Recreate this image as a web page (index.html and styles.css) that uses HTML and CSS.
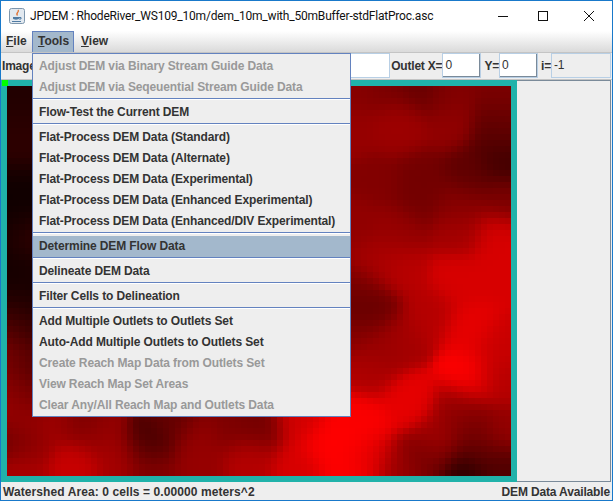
FILE: index.html
```html
<!DOCTYPE html>
<html>
    <head>
        <title>JPDEM</title>
        <meta charset="UTF-8">
        <link rel="stylesheet" href="styles.css">
    </head>
    <body>
        <div class="window">
            <!-- title bar -->
            <div class="titlebar">
                <svg class="appicon" width="16" height="16" viewBox="0 0 16 16">
                    <rect x="0.5" y="0.5" width="15" height="15" rx="2" fill="#e2e9f0" stroke="#7d96ad"/>
                    <path d="M9 2 C11 4 6 5 8.5 7.5" fill="none" stroke="#e0702f" stroke-width="1.3"/>
                    <path d="M4 9 H10 V10.5 C10 12 4 12 4 10.5 Z" fill="#4f7ba3"/>
                    <path d="M10 9.5 H12 V11 H10" fill="none" stroke="#4f7ba3"/>
                    <path d="M3 13.5 H12" stroke="#4f7ba3"/>
                </svg>
                <span class="title">JPDEM : RhodeRiver_WS109_10m/dem_10m_with_50mBuffer-stdFlatProc.asc</span>
                <div class="wincontrols">
                    <svg width="10" height="10" viewBox="0 0 10 10"><path d="M0 5.5 H10" stroke="#111"/></svg>
                    <svg width="10" height="10" viewBox="0 0 10 10"><rect x="0.5" y="0.5" width="9" height="9" fill="none" stroke="#111"/></svg>
                    <svg class="closebtn" width="10" height="10" viewBox="0 0 10 10"><path d="M0 0 L10 10 M10 0 L0 10" stroke="#111"/></svg>
                </div>
            </div>

            <!-- menu bar -->
            <div class="menubar">
                <span class="menu"><u>F</u>ile</span>
                <span class="menu menu-open"><u>T</u>ools</span>
                <span class="menu"><u>V</u>iew</span>
            </div>

            <!-- info row -->
            <div class="inforow">
                <span class="label">Image</span>
                <div class="field field-wide"></div>
                <span class="label">Outlet X=</span>
                <div class="field field-input">0</div>
                <span class="label label-y">Y=</span>
                <div class="field field-input">0</div>
                <span class="label label-i">i=</span>
                <div class="field field-index">-1</div>
            </div>

            <!-- map + side panel -->
            <div class="main">
                <div class="mapframe">
                    <canvas id="dem" class="dem" width="84" height="65"></canvas>
                    <div class="marker"></div>
                </div>
                <div class="sidepanel"></div>
            </div>

            <div class="statusbar">
                <span class="status-left">Watershed Area: 0 cells = 0.00000 meters^2</span>
                <span class="status-right">DEM Data Available</span>
            </div>

            <!-- tools popup -->
            <div class="popup">
                <div class="item disabled">Adjust DEM via Binary Stream Guide Data</div>
                <div class="item disabled">Adjust DEM via Seqeuential Stream Guide Data</div>
                <div class="sep"></div>
                <div class="item">Flow-Test the Current DEM</div>
                <div class="sep"></div>
                <div class="item">Flat-Process DEM Data (Standard)</div>
                <div class="item">Flat-Process DEM Data (Alternate)</div>
                <div class="item">Flat-Process DEM Data (Experimental)</div>
                <div class="item">Flat-Process DEM Data (Enhanced Experimental)</div>
                <div class="item">Flat-Process DEM Data (Enhanced/DIV Experimental)</div>
                <div class="sep"></div>
                <div class="item selected">Determine DEM Flow Data</div>
                <div class="sep"></div>
                <div class="item">Delineate DEM Data</div>
                <div class="sep"></div>
                <div class="item">Filter Cells to Delineation</div>
                <div class="sep"></div>
                <div class="item">Add Multiple Outlets to Outlets Set</div>
                <div class="item">Auto-Add Multiple Outlets to Outlets Set</div>
                <div class="item disabled">Create Reach Map Data from Outlets Set</div>
                <div class="item disabled">View Reach Map Set Areas</div>
                <div class="item disabled">Clear Any/All Reach Map and Outlets Data</div>
            </div>
        </div>
        <script src="script.js"></script>
    </body>
</html>
```
FILE: styles.css
```css
html, body {
    margin: 0;
    padding: 0;
}
body {
    width: 613px;
    height: 501px;
    overflow: hidden;
    font-family: "Liberation Sans", Arial, sans-serif;
    font-size: 12px;
    font-weight: bold;
    color: #333;
}
.window {
    position: relative;
    box-sizing: border-box;
    width: 613px;
    height: 501px;
    border: 1px solid #1979ca;
    display: flex;
    flex-direction: column;
    background: #eee;
}
.titlebar {
    height: 30px;
    flex: none;
    display: flex;
    align-items: center;
    background: #fff;
    padding-left: 8px;
}
.appicon {
    margin-right: 5px;
}
.title {
    font-family: Roboto, sans-serif;
    font-weight: normal;
    font-size: 12px;
    letter-spacing: -0.2px;
    color: #111;
    white-space: nowrap;
}
.wincontrols {
    margin-left: auto;
    display: flex;
    gap: 30px;
    padding-right: 18px;
}
.closebtn {
    margin-left: 6px;
}
.menubar {
    height: 21px;
    flex: none;
    display: flex;
    background: linear-gradient(#fff, #dadada);
    border-bottom: 1px solid #c4c4c4;
}
.menu {
    padding: 3px 5px 0;
    height: 18px;
}
.menu:first-child {
    width: 21px;
}
.menu-open {
    width: 30px;
    background: #a3b8cc;
    border: 1px solid #6382bf;
    border-bottom: 0;
    padding: 2px 5px 0;
}
.menu:last-child {
    margin-left: 2px;
}
.inforow {
    height: 26px;
    flex: none;
    display: flex;
    align-items: center;
    padding: 0 1px 1px 0;
    box-sizing: border-box;
    letter-spacing: -0.2px;
}
.label {
    white-space: nowrap;
    padding-left: 1px;
}
.label-y {
    margin-left: 2px;
}
.label-i {
    margin-left: 2px;
}
.field {
    box-sizing: border-box;
    height: 25px;
    line-height: 23px;
    padding-left: 2px;
    font-weight: normal;
    color: #333;
}
.field-wide {
    flex: 1;
    background: #fff;
    border: 1px solid #b8cfe5;
    margin-left: 2px;
}
.field-input {
    width: 39px;
    background: #fff;
    border: 1px solid #b8cfe5;
    box-shadow: inset 0 -1px 0 #7a8a99, inset -1px 0 0 #7a8a99;
}
.field-index {
    width: 60px;
    border: 1px solid #b8cfe5;
    flex: none;
}
.main {
    height: 403px;
    flex: none;
    display: flex;
    border-top: 1px solid #c4c4c4;
    box-sizing: border-box;
}
.mapframe {
    position: relative;
    flex: none;
    line-height: 0;
    border: 6px solid #20b2aa;
}
.dem {
    display: block;
    width: 504px;
    height: 390px;
    image-rendering: pixelated;
}
.marker {
    position: absolute;
    left: -5px;
    top: -6px;
    width: 6px;
    height: 6px;
    background: #0f0;
}
.sidepanel {
    flex: 1;
    border-right: 1px solid #7a8a99;
    border-top: 1px solid #7a8a99;
    border-bottom: 1px solid #7a8a99;
    margin-right: 1px;
}
.statusbar {
    flex: 1;
    display: flex;
    justify-content: space-between;
    align-items: center;
    padding: 1px 2px 0 2px;
}
.status-left {
    letter-spacing: 0.09px;
}
.status-right {
    letter-spacing: -0.15px;
}
.popup {
    position: absolute;
    left: 31px;
    top: 52px;
    width: 319px;
    height: 364px;
    box-sizing: border-box;
    border: 1px solid #6382bf;
    background: #eee;
    padding: 2px 0;
    letter-spacing: -0.12px;
}
.item {
    height: 21px;
    line-height: 21px;
    padding-left: 6px;
    white-space: nowrap;
}
.disabled {
    color: #999;
}
.selected {
    background: #a3b8cc;
}
.sep {
    height: 4px;
    box-sizing: border-box;
    border-top: 1px solid #6382bf;
    box-shadow: inset 0 1px 0 #fff;
}
```
FILE: script.js
```js
// elevation samples read off the visible map: x, y (page pixels), red level
var samples = [
    // left strip
    [12,95,34],[28,95,34],[12,130,40],[28,130,40],[12,150,50],[28,150,50],[12,178,17],[28,178,17],
    [12,210,14],[28,210,14],[12,232,18],[28,232,60],[12,270,20],[28,270,28],[12,305,30],[28,305,24],
    [14,325,110],[28,325,45],[14,360,135],[28,360,70],[14,395,150],[28,395,95],[14,415,160],[28,420,150],
    [12,440,95],[28,445,150],[20,470,175],
    // bottom strip
    [60,420,165],[80,418,115],[100,432,150],[75,465,200],[120,460,165],[150,445,70],[155,470,135],
    [175,420,100],[200,440,150],[200,470,150],[230,425,125],[260,425,115],[250,460,180],[300,420,210],
    [300,470,215],[330,445,255],[345,440,255],[350,470,255],[360,420,250],[370,460,225],
    // right strip, top to bottom
    [360,90,135],[390,92,120],[420,92,100],[450,95,130],[505,92,125],[505,110,115],[400,122,165],
    [450,125,145],[505,125,100],[355,130,150],[400,130,150],[500,135,85],[505,160,65],[470,170,95],
    [420,175,115],[380,180,130],[420,200,115],[505,200,120],[460,205,130],[400,230,150],[360,225,145],
    [460,230,165],[500,235,215],[380,260,165],[400,270,185],[500,270,215],[460,280,215],[360,290,135],
    [360,305,85],[375,310,110],[355,330,135],[430,315,180],[400,340,165],[470,330,230],[500,350,200],
    [380,350,150],[370,370,175],[470,375,255],[500,380,180],[410,400,230],[460,410,150],[470,430,115],
    [500,430,150],[440,440,165],[430,460,115],[400,470,150],[480,450,100],[465,472,35],[500,470,80]
];

function drawDem() {
    var canvas = document.getElementById("dem");
    var ctx = canvas.getContext("2d");
    for (var j = 0; j < 65; j++) {
        for (var i = 0; i < 84; i++) {
            var px = 8 + i * 6 + 3;
            var py = 86 + j * 6 + 3;
            var sum = 0;
            var wsum = 0;
            for (var k = 0; k < samples.length; k++) {
                var dx = px - samples[k][0];
                var dy = py - samples[k][1];
                var w = Math.exp(-(dx * dx + dy * dy) / 450) + 1e-9;
                sum += w * samples[k][2];
                wsum += w;
            }
            ctx.fillStyle = "rgb(" + Math.round(sum / wsum) + ",0,0)";
            ctx.fillRect(i, j, 1, 1);
        }
    }
}

drawDem();
```
